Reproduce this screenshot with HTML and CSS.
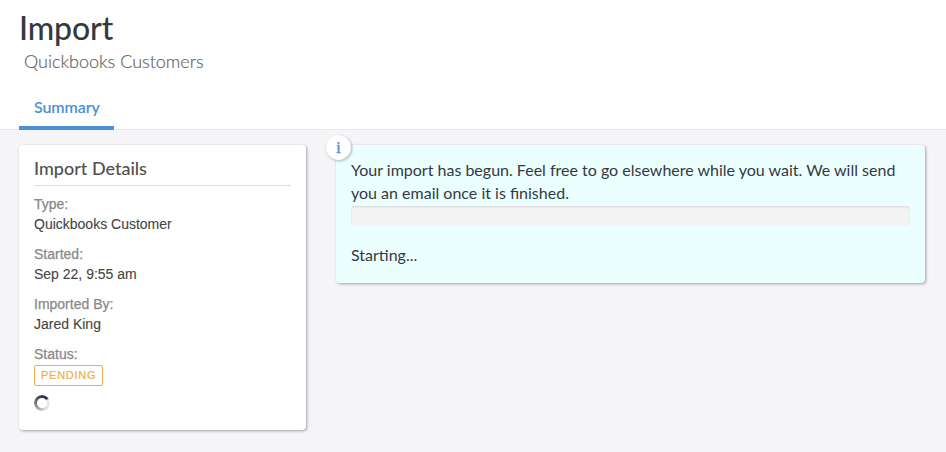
FILE: index.html
```
<!DOCTYPE html>
<html lang="en">
<head>
<meta charset="utf-8">
<title>Import</title>
<link rel="stylesheet" href="styles.css">
</head>
<body>
<header class="page-header">
  <h1 class="title">Import</h1>
  <p class="subtitle">Quickbooks Customers</p>
  <nav class="tabs"><a class="tab">Summary</a></nav>
</header>
<main class="content">
  <section class="card">
    <h2 class="card-title">Import Details</h2>
    <dl class="details">
      <dt>Type:</dt><dd>Quickbooks Customer</dd>
      <dt>Started:</dt><dd>Sep 22, 9:55 am</dd>
      <dt>Imported By:</dt><dd>Jared King</dd>
      <dt>Status:</dt><dd class="status"><span class="badge">PENDING</span></dd>
    </dl>
    <div class="spinner"></div>
  </section>
  <section class="alert">
    <span class="info">i</span>
    <p class="message">Your import has begun. Feel free to go elsewhere while you wait. We will send you an email once it is finished.</p>
    <div class="progress"></div>
    <p class="message">Starting...</p>
  </section>
</main>
</body>
</html>
```
FILE: styles.css
```
* { box-sizing: border-box; }
body {
  margin: 0;
  min-height: 452px;
  background: #f5f5f8;
  font-family: "Liberation Sans", Arial, sans-serif;
  color: #444;
}
h1, h2, p, dl, dd { margin: 0; }
.page-header {
  height: 130px;
  padding: 8px 19px 0;
  background: #fff;
  border-bottom: 1px solid #e9e9ec;
  font-family: Lato, sans-serif;
}
.title {
  font-size: 32px;
  line-height: 40px;
  font-weight: 500;
  letter-spacing: -.1px;
  color: #35393f;
}
.subtitle {
  padding-left: 5px;
  font-size: 18px;
  line-height: 26px;
  font-weight: 300;
  color: #666;
  -webkit-text-stroke: .2px #666;
}
.tabs { display: flex; margin-top: 14px; }
.tab {
  width: 95px;
  height: 42px;
  padding: 7px 14px 0 15px;
  border-bottom: 4px solid #4a90db;
  font-size: 16px;
  line-height: 24px;
  font-weight: 600;
  letter-spacing: -.1px;
  color: #4a90db;
}
.content {
  display: flex;
  align-items: flex-start;
  gap: 30px;
  padding: 15px 21px 0 19px;
}
.card, .alert {
  border-radius: 4px;
  box-shadow: 1px 1px 3px rgba(0, 0, 0, .35);
}
.card {
  width: 287px;
  height: 285px;
  padding: 9px 15px;
  background: #fff;
}
.card-title {
  height: 32px;
  border-bottom: 1px solid #ddd;
  font-family: Lato, sans-serif;
  font-size: 18px;
  line-height: 28px;
  font-weight: 500;
  color: #505050;
}
.details {
  margin-top: 8px;
  font-size: 14px;
  line-height: 20px;
  -webkit-text-stroke: .1px #444;
}
.details dt { color: #888; -webkit-text-stroke: .25px #888; }
.details dd { margin-bottom: 10px; }
.details .status { height: 21px; margin: 1px 0 9px; }
.badge {
  display: block;
  width: 69px;
  height: 21px;
  padding-left: 6px;
  border: 1px solid #f0ad4e;
  border-radius: 2px;
  font-size: 11px;
  line-height: 19px;
  letter-spacing: .75px;
  color: #f0ad4e;
  -webkit-text-stroke: .2px #f0ad4e;
}
.spinner {
  width: 16px;
  height: 16px;
  border-radius: 50%;
  background: conic-gradient(#34363e 0deg 45deg, #eee 65deg, #ddd 150deg, #777 270deg, #34363e 360deg);
  -webkit-mask: radial-gradient(circle, transparent 4.6px, #000 5.4px);
  mask: radial-gradient(circle, transparent 4.6px, #000 5.4px);
}
.alert {
  position: relative;
  flex: 1;
  height: 138px;
  padding: 13px 15px;
  background: #ebffff;
  font-family: Lato, sans-serif;
}
.message {
  font-size: 16px;
  line-height: 23px;
  color: #35393f;
}
.progress {
  height: 20px;
  margin: 2px 0 17px;
  border-radius: 4px;
  background: #f4f4f4;
  box-shadow: inset 0 1px 2px rgba(0, 0, 0, .12);
}
.info {
  position: absolute;
  left: -10px;
  top: -10px;
  width: 25px;
  height: 25px;
  border-radius: 50%;
  background: #fff;
  box-shadow: 1px 1px 3px rgba(0, 0, 0, .3);
  text-align: center;
  font-family: "Liberation Serif", serif;
  font-size: 16px;
  line-height: 26px;
  color: #4a90db;
  -webkit-text-stroke: .4px #4a90db;
}
```
